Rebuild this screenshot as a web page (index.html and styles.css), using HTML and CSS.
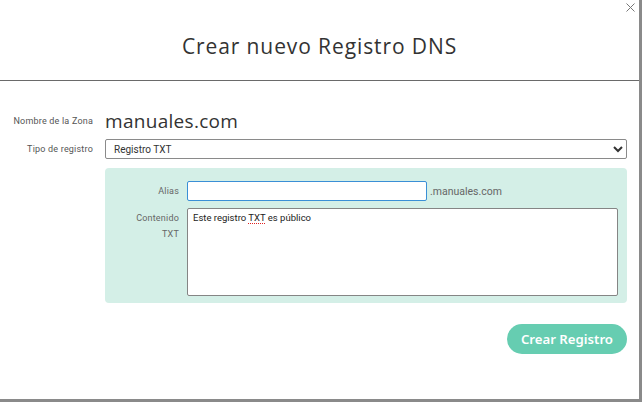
FILE: index.html
```html
<!DOCTYPE html>
<html lang="es">
<head>
    <meta charset="UTF-8">
    <meta name="viewport" content="width=device-width, initial-scale=1.0">
    <title>Crear nuevo Registro DNS</title>
    <link rel="stylesheet" href="styles.css">
</head>
<body>

    <div class="modal">
        <div class="modal-header">
            <h1>Crear nuevo Registro DNS</h1>
            <button class="close" type="button" aria-label="Cerrar">
                <svg width="9" height="9" viewBox="0 0 9 9"><path d="M0.5 0.5 L8.5 8.5 M8.5 0.5 L0.5 8.5" stroke="#777" stroke-width="1" fill="none"/></svg>
            </button>
        </div>

        <form class="modal-body" id="dnsForm">
            <div class="row row-zone">
                <label class="label">Nombre de la Zona</label>
                <div class="zone">manuales.com</div>
            </div>

            <div class="row">
                <label class="label" for="tipo">Tipo de registro</label>
                <select id="tipo" name="tipo">
                    <option value="TXT">Registro TXT</option>
                    <option value="A">Registro A</option>
                    <option value="CNAME">Registro CNAME</option>
                    <option value="MX">Registro MX</option>
                </select>
            </div>

            <div class="row">
                <span></span>
                <div class="panel">
                    <label class="panel-label" for="alias">Alias</label>
                    <div class="alias-field">
                        <input type="text" id="alias" name="alias">
                        <span class="suffix">.manuales.com</span>
                    </div>

                    <label class="panel-label panel-label-top">Contenido TXT</label>
                    <div class="textbox" contenteditable="true">Este registro <span class="typo">TXT</span> es público</div>
                </div>
            </div>

            <div class="actions">
                <button type="submit" class="btn-primary">Crear Registro</button>
            </div>
        </form>
    </div>

</body>
</html>
```

FILE: styles.css
```css
body {
    margin: 0;
    padding: 0;
    background-color: #8a8a8a;
    font-family: 'Roboto', sans-serif;
}

.modal {
    width: 639px;
    height: 399px;
    background-color: white;
}

.modal-header {
    position: relative;
    height: 80px;
    border-bottom: 1px solid #6a6a6a;
    display: flex;
    justify-content: center;
    align-items: center;
}

h1 {
    margin: 0;
    padding-top: 12px;
    font-family: 'Open Sans', sans-serif;
    font-weight: 400;
    font-size: 21px;
    letter-spacing: 0.9px;
    color: #333;
}

.close {
    position: absolute;
    top: 3px;
    right: 4px;
    padding: 0;
    border: none;
    background: none;
    line-height: 0;
    cursor: pointer;
}

.modal-body {
    padding: 29px 12px 0 0;
}

.row {
    display: grid;
    grid-template-columns: 105px 1fr;
    align-items: center;
    margin-bottom: 9px;
}

.row-zone {
    margin-bottom: 7px;
}

.label {
    padding-right: 12px;
    text-align: right;
    font-size: 9px;
    letter-spacing: 0.2px;
    color: #555;
}

.zone {
    font-family: 'Open Sans', sans-serif;
    font-size: 19px;
    line-height: 22px;
    letter-spacing: 0.3px;
    color: #333;
}

select {
    height: 20px;
    padding: 0 4px;
    border: 1px solid #8a8a8a;
    border-radius: 2px;
    background-color: white;
    font-family: 'Roboto', sans-serif;
    font-size: 10px;
    color: #333;
}

.panel {
    display: grid;
    grid-template-columns: 74px 1fr;
    column-gap: 8px;
    row-gap: 7px;
    padding: 13px 9px 7px 0;
    background-color: #d4efe7;
    border-radius: 4px;
}

.panel-label {
    padding-left: 20px;
    text-align: right;
    font-size: 9px;
    letter-spacing: 0.2px;
    line-height: 16px;
    color: #666;
    align-self: center;
}

.panel-label-top {
    align-self: start;
    padding-top: 2px;
}

.alias-field {
    display: flex;
    align-items: center;
    gap: 3px;
}

input[type="text"] {
    width: 240px;
    height: 20px;
    box-sizing: border-box;
    border: 1px solid #3a8fd6;
    border-radius: 2px;
    padding: 0 4px;
    font-size: 10px;
    outline: none;
}

.suffix {
    font-size: 10.5px;
    color: #666;
}

.textbox {
    height: 88px;
    box-sizing: border-box;
    border: 1px solid #858585;
    border-radius: 2px;
    background-color: white;
    padding: 3px 5px;
    font-size: 9.5px;
    line-height: 12px;
    color: #222;
    outline: none;
}

.typo {
    text-decoration: underline dotted #e02020;
    text-decoration-thickness: 1px;
    text-underline-offset: 2px;
}

.actions {
    display: flex;
    justify-content: flex-end;
    margin-top: 21px;
}

.btn-primary {
    height: 30px;
    padding: 0 14px;
    border: none;
    border-radius: 15px;
    background-color: #66cdb1;
    color: white;
    font-family: 'Noto Sans', sans-serif;
    font-weight: 600;
    font-size: 13.2px;
    cursor: pointer;
}
```
